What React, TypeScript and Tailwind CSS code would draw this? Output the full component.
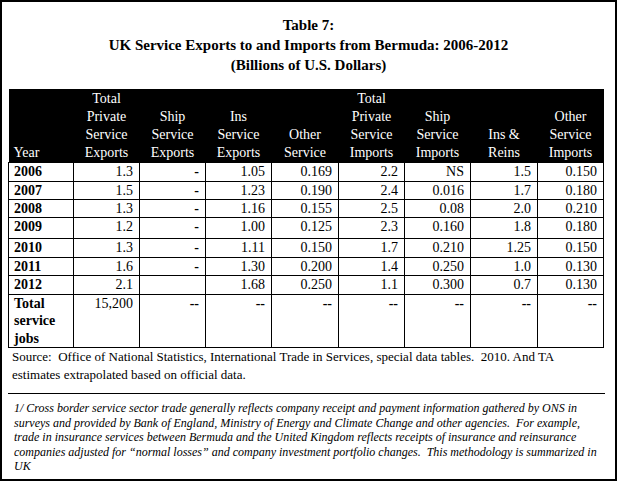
const headers = [
  ["Year"],
  ["Total", "Private", "Service", "Exports"],
  ["Ship", "Service", "Exports"],
  ["Ins", "Service", "Exports"],
  ["Other", "Service"],
  ["Total", "Private", "Service", "Imports"],
  ["Ship", "Service", "Imports"],
  ["Ins &", "Reins"],
  ["Other", "Service", "Imports"],
];

const colWidths = [65, 66, 66, 66, 67, 66, 66, 67, 66];

const rows = [
  { year: "2006", h: "h-[19px]", cells: ["1.3", "-", "1.05", "0.169", "2.2", "NS", "1.5", "0.150"] },
  { year: "2007", h: "h-[18px]", cells: ["1.5", "-", "1.23", "0.190", "2.4", "0.016", "1.7", "0.180"] },
  { year: "2008", h: "h-[18px]", cells: ["1.3", "-", "1.16", "0.155", "2.5", "0.08", "2.0", "0.210"] },
  { year: "2009", h: "h-[21px]", cells: ["1.2", "-", "1.00", "0.125", "2.3", "0.160", "1.8", "0.180"] },
  { year: "2010", h: "h-[19px]", cells: ["1.3", "-", "1.11", "0.150", "1.7", "0.210", "1.25", "0.150"] },
  { year: "2011", h: "h-[18px]", cells: ["1.6", "-", "1.30", "0.200", "1.4", "0.250", "1.0", "0.130"] },
  { year: "2012", h: "h-[19px]", cells: ["2.1", "", "1.68", "0.250", "1.1", "0.300", "0.7", "0.130"] },
];

const footnote = [
  "1/ Cross border service sector trade generally reflects company receipt and payment information gathered by ONS in",
  "surveys and provided by Bank of England, Ministry of Energy and Climate Change and other agencies.\u00a0 For example,",
  "trade in insurance services between Bermuda and the United Kingdom reflects receipts of insurance and reinsurance",
  "companies adjusted for \u201cnormal losses\u201d and company investment portfolio changes.\u00a0 This methodology is summarized in",
  "UK",
];

export default function App() {
  return (
    <div className="w-[617px] h-[481px] border-2 border-black bg-white text-black font-['Liberation_Serif',serif] box-border overflow-hidden">
      {/* Title */}
      <div className="pt-[13px] text-center font-bold text-[15px] leading-[20px]">
        <p>Table 7:</p>
        <p>UK Service Exports to and Imports from Bermuda: 2006-2012</p>
        <p>(Billions of U.S. Dollars)</p>
      </div>

      {/* Table */}
      <table className="ml-[6px] mt-[14px] border-collapse table-fixed text-[14px]">
        <colgroup>
          {colWidths.map((w, i) => (
            <col key={i} style={{ width: w }} />
          ))}
        </colgroup>
        <thead>
          <tr className="bg-black text-white h-[73px]">
            {headers.map((lines, i) => (
              <th
                key={i}
                className={`align-bottom font-normal leading-[18px] pb-0 ${i === 0 ? "text-left pl-[5px]" : "text-center"}`}
              >
                {lines.map((l) => (
                  <div key={l}>{l}</div>
                ))}
              </th>
            ))}
          </tr>
        </thead>
        <tbody>
          {rows.map((r) => (
            <tr key={r.year} className={r.h}>
              <td className="border border-black pl-[5px] font-bold leading-[17px] align-top">{r.year}</td>
              {r.cells.map((c, i) => (
                <td
                  key={i}
                  className={`border border-black text-right pr-[6px] leading-[17px] align-top ${c === "-" ? "font-bold" : ""}`}
                >
                  {c}
                </td>
              ))}
            </tr>
          ))}
          <tr className="h-[52px]">
            <td className="border border-black pl-[5px] font-bold leading-[17.5px] align-top">
              Total
              <br />
              service
              <br />
              jobs
            </td>
            <td className="border border-black text-right pr-[6px] align-top leading-[18px]">15,200</td>
            {Array.from({ length: 7 }).map((_, i) => (
              <td key={i} className="border border-black text-right pr-[6px] align-top leading-[18px] font-bold">
                --
              </td>
            ))}
          </tr>
        </tbody>
      </table>

      {/* Source */}
      <p className="pl-[10px] text-[13px] leading-[18px] whitespace-nowrap">
        Source:&nbsp; Office of National Statistics, International Trade in Services, special data tables.&nbsp; 2010. And TA
        <br />
        estimates extrapolated based on official data.
      </p>

      <div className="ml-[6px] mr-[10px] mt-[9px] border-t border-black" />

      {/* Footnote */}
      <div className="pl-[12px] pt-[7px] italic text-[12px] leading-[14.6px] whitespace-nowrap">
        {footnote.map((line) => (
          <p key={line}>{line}</p>
        ))}
      </div>
    </div>
  );
}
